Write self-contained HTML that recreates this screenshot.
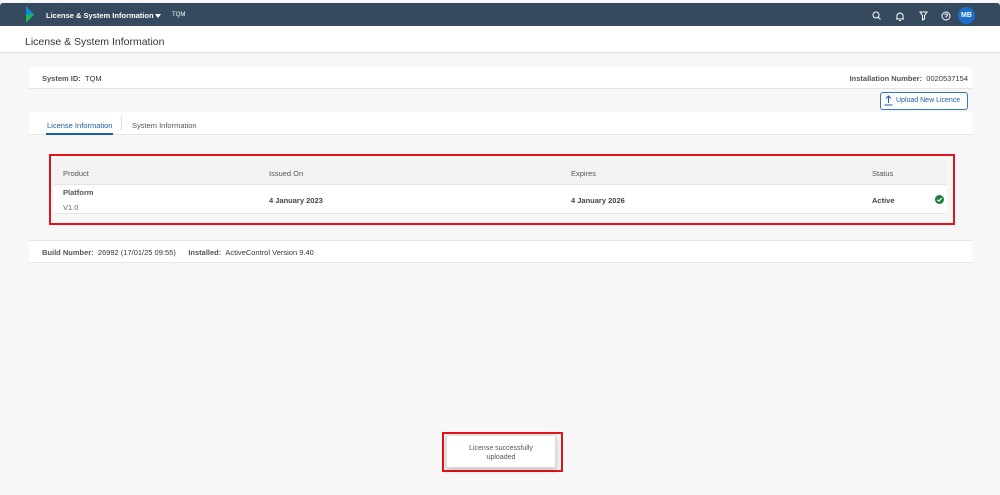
<!DOCTYPE html>
<html><head><style>
*{box-sizing:border-box;margin:0;padding:0}
body{width:1000px;height:495px;background:#f7f7f7;font-family:"Liberation Sans",sans-serif;position:relative;overflow:hidden;color:#32363a}
.a{position:absolute}
.hdr{left:0;top:3px;width:1000px;height:23px;background:#354a5f;border-radius:3px 3px 0 0}
.t{font-size:7.5px}
</style></head><body>
<div class="a hdr">
 <svg class="a" style="left:25px;top:3px" width="10" height="17" viewBox="0 0 10 17"><path d="M1 0 L9 8.5 L1 17 Z" fill="#1db954"/><path d="M1 0 L9 8.5 L1 8.5Z" fill="#0a8dd6"/></svg>
 <div class="a" style="left:46px;top:8px;color:#fff;font-size:7.5px;font-weight:bold">License &amp; System Information</div>
 <div class="a" style="left:155px;top:11px;width:0;height:0;border-left:3.5px solid transparent;border-right:3.5px solid transparent;border-top:4px solid #fff"></div>
 <div class="a" style="left:172px;top:9px;color:#fff;font-size:6px">TQM</div>
 <svg class="a" style="left:871px;top:7px" width="100" height="12" viewBox="0 0 100 12" fill="none" stroke="#fff" stroke-width="1">
  <circle cx="5" cy="5" r="3"/><path d="M7.2 7.2 L9.5 9.5"/>
  <path d="M26 9 L26 5 Q29 1 32 5 L32 9 Z M25 9 L33 9 M28 10.5 L30 10.5"/>
  <path d="M49 2 L56 2 L53.5 5.5 L53.5 9 L51.5 10 L51.5 5.5 Z"/>
  <circle cx="75" cy="6" r="4"/><path d="M73.5 5 Q75 3 76.5 4.5 Q76.5 6 75 6.5 L75 7.5"/>
 </svg>
 <div class="a" style="left:958px;top:4px;width:17px;height:17px;border-radius:50%;background:#1b6fc8;color:#fff;font-size:7px;font-weight:bold;text-align:center;line-height:17px">MB</div>
</div>
<div class="a" style="left:0;top:26px;width:1000px;height:27px;background:#fff;border-bottom:1px solid #e0e0e0"></div>
<div class="a" style="left:25px;top:36px;font-size:10.5px;color:#32363a">License &amp; System Information</div>

<div class="a" style="left:29px;top:67px;width:943px;height:22px;background:#fff;border-bottom:1px solid #e5e5e5"></div>
<div class="a t" style="left:42px;top:74px;font-weight:bold;color:#555">System ID:&nbsp; <span style="font-weight:normal;color:#32363a">TQM</span></div>
<div class="a t" style="right:32px;top:74px;font-weight:bold;color:#555">Installation Number:&nbsp; <span style="font-weight:normal;color:#32363a">0020537154</span></div>
<div class="a" style="left:880px;top:92px;width:88px;height:18px;border:1px solid #3a78b5;border-radius:3px;background:#fff;color:#1a5ea0;font-size:7px;line-height:16px;padding-left:15px">Upload New Licence</div>
<svg class="a" style="left:884px;top:95px" width="9" height="11" viewBox="0 0 9 11" fill="none" stroke="#1a5ea0" stroke-width="1"><path d="M4.5 8 L4.5 1 M2 3.5 L4.5 1 L7 3.5 M0.5 10 L8.5 10"/></svg>

<div class="a" style="left:29px;top:112px;width:943px;height:23px;background:#fff;border-bottom:1px solid #e5e5e5"></div>
<div class="a t" style="left:47px;top:121px;color:#1a5ea0">License Information</div>
<div class="a" style="left:46px;top:133px;width:67px;height:2px;background:#1a5ea0"></div>
<div class="a" style="left:121px;top:116px;width:1px;height:15px;background:#ddd"></div>
<div class="a t" style="left:132px;top:121px;color:#555">System Information</div>

<div class="a" style="left:49px;top:154px;width:906px;height:71px;border:2px solid #e3131b"></div>
<div class="a" style="left:54px;top:159px;width:892px;height:26px;background:#f2f2f2;border-bottom:1px solid #e5e5e5"></div>
<div class="a" style="left:54px;top:185px;width:892px;height:29px;background:#fff;border-bottom:1px solid #e5e5e5"></div>
<div class="a t" style="left:63px;top:169px;color:#555">Product</div>
<div class="a t" style="left:269px;top:169px;color:#555">Issued On</div>
<div class="a t" style="left:571px;top:169px;color:#555">Expires</div>
<div class="a t" style="left:872px;top:169px;color:#555">Status</div>
<div class="a t" style="left:63px;top:188px;font-weight:bold;color:#555">Platform</div>
<div class="a t" style="left:63px;top:203px;color:#666">V1.0</div>
<div class="a t" style="left:269px;top:196px;font-weight:bold;color:#444">4 January 2023</div>
<div class="a t" style="left:571px;top:196px;font-weight:bold;color:#444">4 January 2026</div>
<div class="a t" style="left:872px;top:196px;font-weight:bold;color:#444">Active</div>
<svg class="a" style="left:935px;top:195px" width="9" height="9" viewBox="0 0 9 9"><circle cx="4.5" cy="4.5" r="4.5" fill="#1a7f3c"/><path d="M2.3 4.7 L3.9 6.2 L6.7 3" stroke="#fff" stroke-width="1.2" fill="none"/></svg>

<div class="a" style="left:29px;top:240px;width:943px;height:23px;background:#fff;border-top:1px solid #e8e8e8;border-bottom:1px solid #e5e5e5"></div>
<div class="a t" style="left:42px;top:248px;font-weight:bold;color:#555">Build Number:&nbsp; <span style="font-weight:normal;color:#32363a">26992 (17/01/25 09:55)</span>&nbsp;&nbsp;&nbsp;&nbsp;&nbsp; Installed:&nbsp; <span style="font-weight:normal;color:#32363a">ActiveControl Version 9.40</span></div>

<div class="a" style="left:442px;top:432px;width:121px;height:40px;border:2px solid #e3131b"></div>
<div class="a" style="left:446px;top:435px;width:110px;height:33px;background:#fff;border:1px solid #ddd;border-radius:2px;box-shadow:0 2px 6px rgba(0,0,0,.25);font-size:7px;color:#555;text-align:center;padding-top:8px;line-height:9px">License successfully<br>uploaded</div>
</body></html>
